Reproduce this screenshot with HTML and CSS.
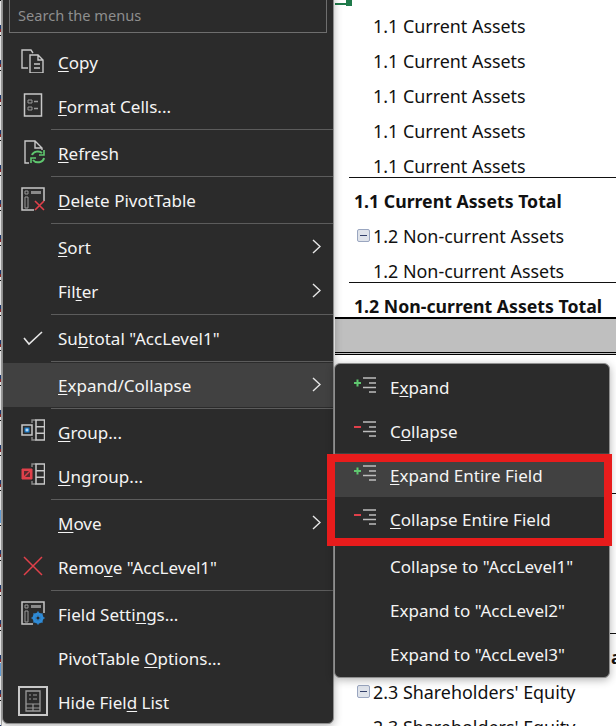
FILE: index.html
```html
<!DOCTYPE html>
<html lang="en">
<head>
<meta charset="utf-8">
<title>PivotTable context menu</title>
<link rel="stylesheet" href="styles.css">
</head>
<body>
<div class="strip"></div>
<div class="sheet">
  <div class="cursor"></div>
  <div class="row lvl">1.1 Current Assets</div>
  <div class="row lvl">1.1 Current Assets</div>
  <div class="row lvl">1.1 Current Assets</div>
  <div class="row lvl">1.1 Current Assets</div>
  <div class="row lvl">1.1 Current Assets</div>
  <div class="row total">1.1 Current Assets Total</div>
  <div class="row group"><span class="minus"></span>1.2 Non-current Assets</div>
  <div class="row lvl">1.2 Non-current Assets</div>
  <div class="row total">1.2 Non-current Assets Total</div>
  <div class="band"></div>
  <div class="spacer"></div>
  <div class="row total"></div>
  <div class="row lvl"></div>
  <div class="row lvl"></div>
  <div class="row lvl"></div>
  <div class="row total tail">a</div>
  <div class="row group"><span class="minus"></span>2.3 Shareholders' Equity</div>
  <div class="row lvl">2.3 Shareholders' Equity</div>
</div>

<div class="menu main">
  <div class="search">Search the menus</div>
  <div class="item"><svg class="ico" viewBox="0 0 24 24"><path d="M7 19H1V1h9l2 3M9 6h8l5 5v13H9zM17 6v5h5M13 15h6M13 19h6" fill="none" stroke="#c8c8c8" stroke-width="1.4"/></svg><span><u>C</u>opy</span></div>
  <div class="item"><svg class="ico" viewBox="0 0 24 24"><path d="M3.500 1h17v22h-17z" fill="none" stroke="#c8c8c8" stroke-width="1.500"/><path d="M7 7h4v3H7zM7 14h4v3H7z" fill="none" stroke="#9a9a9a"/><path d="M13 8.500h4M13 15.500h4" stroke="#9a9a9a" stroke-width="1.300"/></svg><span><u>F</u>ormat Cells...</span></div>
  <div class="sep"></div>
  <div class="item"><svg class="ico" viewBox="0 0 24 24"><path d="M8 23H4V1h10l7 7v2M14 1v7h7" fill="none" stroke="#c8c8c8" stroke-width="1.400"/><path d="M11 15a6 5 0 0 1 10-2M23 18a6 5 0 0 1-11 2" fill="none" stroke="#5fc76f" stroke-width="2"/><path d="M23 10v5h-5M10 23v-5h5" fill="none" stroke="#5fc76f" stroke-width="1.600"/></svg><span><u>R</u>efresh</span></div>
  <div class="sep"></div>
  <div class="item"><svg class="ico" viewBox="0 0 24 24"><path d="M13 23H1V1h22v13" fill="none" stroke="#c8c8c8" stroke-width="1.500"/><path d="M4 4h3v3H4zM4 10h3v11H4z" fill="none" stroke="#9a9a9a"/><path d="M10 4h10v3H10z" fill="#8a8a8a"/><path d="M14 14l9 9M23 14l-9 9" stroke="#e0404a" stroke-width="1.600"/></svg><span><u>D</u>elete PivotTable</span></div>
  <div class="sep"></div>
  <div class="item"><span class="ico"></span><span><u>S</u>ort</span><svg class="arrow" viewBox="0 0 9 15"><path d="M1 1l7 6.500-7 6.500" fill="none" stroke="#e6e6e6" stroke-width="1.400"/></svg></div>
  <div class="item"><span class="ico"></span><span>Fil<u>t</u>er</span><svg class="arrow" viewBox="0 0 9 15"><path d="M1 1l7 6.500-7 6.500" fill="none" stroke="#e6e6e6" stroke-width="1.400"/></svg></div>
  <div class="sep"></div>
  <div class="item"><svg class="ico" viewBox="0 0 24 24"><path d="M3 13l5 6L21 7" fill="none" stroke="#e6e6e6" stroke-width="1.600"/></svg><span>Su<u>b</u>total "AccLevel1"</span></div>
  <div class="sep"></div>
  <div class="item hot"><span class="ico"></span><span><u>E</u>xpand/Collapse</span><svg class="arrow" viewBox="0 0 9 15"><path d="M1 1l7 6.500-7 6.500" fill="none" stroke="#e6e6e6" stroke-width="1.400"/></svg></div>
  <div class="sep"></div>
  <div class="item"><svg class="ico" viewBox="0 0 24 24"><path d="M1 6h10v10H1z" fill="none" stroke="#c8c8c8" stroke-width="1.500"/><path d="M3.500 8.500h5v5h-5z" fill="#1f80cf"/><path d="M4.500 11h3M6 9.500v3" stroke="#e8f4ff"/><path d="M11 4V1h4M11 18v3h4" fill="none" stroke="#8a8a8a" stroke-width="1.400"/><path d="M15 1h8.500v20H15zM15 7.700h8.500M15 14.300h8.500" fill="none" stroke="#c8c8c8" stroke-width="1.500"/></svg><span><u>G</u>roup...</span></div>
  <div class="item"><svg class="ico" viewBox="0 0 24 24"><path d="M1 6h10v10H1z" fill="#e0404a" stroke="#e0404a"/><path d="M3 8h6v6H3z" fill="#5a2a30"/><path d="M3 14l6-6" stroke="#e0404a" stroke-width="1.400"/><path d="M11 4V1h4M11 18v3h4" fill="none" stroke="#8a8a8a" stroke-width="1.400"/><path d="M15 1h8.500v20H15zM15 7.700h8.500M15 14.300h8.500" fill="none" stroke="#c8c8c8" stroke-width="1.500"/></svg><span><u>U</u>ngroup...</span></div>
  <div class="sep"></div>
  <div class="item"><span class="ico"></span><span><u>M</u>ove</span><svg class="arrow" viewBox="0 0 9 15"><path d="M1 1l7 6.500-7 6.500" fill="none" stroke="#e6e6e6" stroke-width="1.400"/></svg></div>
  <div class="item"><svg class="ico" viewBox="0 0 24 24"><path d="M3 3l18 18M21 3L3 21" stroke="#e0404a" stroke-width="1.500"/></svg><span>Remo<u>v</u>e "AccLevel1"</span></div>
  <div class="sep"></div>
  <div class="item"><svg class="ico" viewBox="0 0 24 24"><path d="M12 23H1V1h22v11" fill="none" stroke="#c8c8c8" stroke-width="1.500"/><path d="M4 4h3v3H4zM4 10h3v11H4z" fill="none" stroke="#9a9a9a"/><path d="M10 4h10v3H10z" fill="#8a8a8a"/><circle cx="17" cy="17" r="4" fill="none" stroke="#2f8bd6" stroke-width="3"/><path d="M17 10.500v13M10.500 17h13M12.500 12.500l9 9M21.500 12.500l-9 9" stroke="#2f8bd6" stroke-width="1.500"/><circle cx="17" cy="17" r="1.500" fill="#2b2b2b"/></svg><span>Field Setti<u>n</u>gs...</span></div>
  <div class="item"><span class="ico"></span><span>PivotTable <u>O</u>ptions...</span></div>
  <div class="item"><span class="framed"><svg class="small" viewBox="0 0 16 22"><path d="M1 1h14v20H1z" fill="none" stroke="#9a9a9a" stroke-width="1.300"/><path d="M4 5h2M4 9h2M8 5h4M8 9h4M1 14h14M1 18h14M8 14v7" stroke="#9a9a9a" stroke-width="1.200" fill="none"/></svg></span><span>Hide Fiel<u>d</u> List</span></div>
</div>

<div class="menu sub">
  <div class="item"><svg class="tree" viewBox="0 0 24 22"><path d="M2 7h7M5.500 3.500v7" stroke="#5fc76f" stroke-width="2"/><path d="M11 2h13M17 7h7M11 11.500h13M17 16h7" stroke="#bdbdbd" stroke-width="1.600"/></svg><span>E<u>x</u>pand</span></div>
  <div class="item"><svg class="tree" viewBox="0 0 24 22"><path d="M2 7h7" stroke="#e0404a" stroke-width="2"/><path d="M11 2h13M17 7h7M11 11.500h13M17 16h7" stroke="#bdbdbd" stroke-width="1.600"/></svg><span>C<u>o</u>llapse</span></div>
  <div class="item hot"><svg class="tree" viewBox="0 0 24 22"><path d="M2 7h7M5.500 3.500v7" stroke="#5fc76f" stroke-width="2"/><path d="M11 2h13M17 7h7M11 11.500h13M17 16h7" stroke="#bdbdbd" stroke-width="1.600"/></svg><span><u>E</u>xpand Entire Field</span></div>
  <div class="item"><svg class="tree" viewBox="0 0 24 22"><path d="M2 7h7" stroke="#e0404a" stroke-width="2"/><path d="M11 2h13M17 7h7M11 11.500h13M17 16h7" stroke="#bdbdbd" stroke-width="1.600"/></svg><span><u>C</u>ollapse Entire Field</span></div>
  <div class="gap"></div>
  <div class="item"><span class="tree"></span><span>Collapse to "AccLevel1"</span></div>
  <div class="item"><span class="tree"></span><span>Expand to "AccLevel2"</span></div>
  <div class="item"><span class="tree"></span><span>Expand to "AccLevel3"</span></div>
</div>

<div class="callout"></div>
</body>
</html>
```

FILE: styles.css
```css
* { box-sizing: border-box; }
html, body { margin: 0; padding: 0; }
body {
  width: 616px;
  height: 726px;
  overflow: hidden;
  position: relative;
  background: #fff;
}
.strip {
  position: absolute;
  left: 0;
  top: 0;
  width: 2px;
  height: 726px;
  border-right: 1px solid #b0b0b0;
  background:
    linear-gradient(#6db0f0, #6db0f0) 0 510px / 100% 13px no-repeat,
    linear-gradient(#6db0f0, #6db0f0) 0 663px / 100% 13px no-repeat,
    repeating-linear-gradient(#111 0 1px, #fff 1px 25px, #1f3d7a 25px 29px, #9a2a2a 29px 32px, #fff 32px 35px);
}
.sheet {
  position: relative;
  width: 616px;
  height: 726px;
  padding: 8px 0 0 335px;
  display: flex;
  flex-direction: column;
  font-family: "Noto Sans", sans-serif;
  font-size: 17.9px;
  color: #111;
  overflow: hidden;
}
.cursor {
  position: absolute;
  left: 335px;
  top: 3px;
  width: 11px;
  height: 2px;
  background: #1f7a4a;
}
.cursor::after {
  content: "";
  position: absolute;
  left: 11px;
  top: -3px;
  width: 6px;
  height: 6px;
  background: #1f7a4a;
}
.row {
  flex: none;
  height: 35px;
  display: flex;
  align-items: center;
  white-space: nowrap;
}
.lvl { padding-left: 38px; }
.group { padding-left: 22px; }
.total {
  padding-left: 19px;
  font-size: 17.7px;
  font-weight: 700;
  position: relative;
}
.total::before {
  content: "";
  position: absolute;
  left: 14px;
  right: 0;
  top: -6px;
  height: 1px;
  background: #111;
}
.tail { padding-left: 276px; }
.minus {
  width: 13px;
  height: 13px;
  margin-right: 3px;
  background: #dfe3ea;
  border: 1px solid #9aa6c0;
  border-radius: 2px;
  position: relative;
}
.minus::after {
  content: "";
  position: absolute;
  left: 2px;
  right: 2px;
  top: 5px;
  height: 1px;
  background: #33406a;
}
.band {
  flex: none;
  height: 38px;
  margin-top: -6px;
  background: #bfbfbf;
  border-top: 2px solid #000;
  border-bottom: 3px double #000;
}
.spacer { flex: none; height: 144px; }
.menu {
  position: absolute;
  background: #2b2b2b;
  color: #f4f4f4;
  font-family: "Noto Sans", sans-serif;
  font-size: 17px;
  box-shadow: 0 2px 8px rgba(0, 0, 0, .3);
  border: 1px solid #8f8f8f;
  border-radius: 6px;
}
.main {
  left: 2px;
  top: -8px;
  width: 332px;
  height: 732px;
  padding: 6px 0 0;
}
.sub {
  left: 334px;
  top: 363px;
  width: 276px;
  height: 315px;
  padding-top: 1px;
}
.search {
  margin: 0 6px 7px 6px;
  height: 34px;
  padding-left: 8px;
  border: 1px solid #6e6e6e;
  color: #8e8e8e;
  font-size: 14.6px;
  line-height: 30px;
}
.item {
  height: 44px;
  display: flex;
  align-items: center;
  white-space: nowrap;
  padding-left: 18px;
}
.hot { background: #414141; }
.ico {
  flex: none;
  width: 24px;
  height: 24px;
  margin: 0 13px 2px 0;
  display: block;
}
.sub .item { padding-left: 17px; }
.tree {
  flex: none;
  width: 24px;
  height: 22px;
  margin-right: 14px;
  display: block;
}
.small { width: 16px; height: 22px; display: block; }
.framed {
  flex: none;
  width: 30px;
  height: 30px;
  margin: 0 10px 2px -3px;
  border: 2px solid #c8c8c8;
  display: flex;
  align-items: center;
  justify-content: center;
}
.arrow {
  width: 9px;
  height: 15px;
  margin: 0 12px 2px auto;
}
.sep {
  height: 3px;
  margin-left: 48px;
  background: linear-gradient(#5c5c5c, #5c5c5c) 0 1px / 100% 1px no-repeat;
}
.gap { height: 3px; }
u { text-underline-offset: 2px; }
.callout {
  position: absolute;
  left: 327px;
  top: 454px;
  width: 285px;
  height: 92px;
  border: 8px solid #e81c1c;
}
```
